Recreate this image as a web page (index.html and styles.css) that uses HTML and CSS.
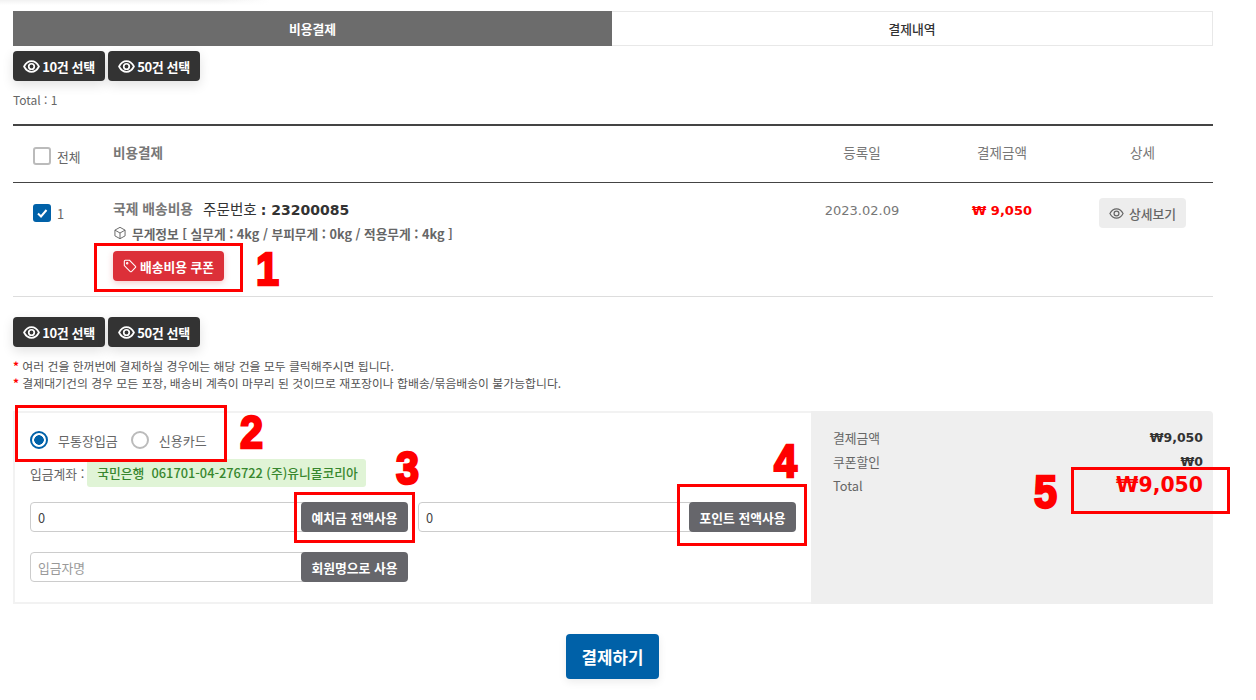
FILE: index.html
```html
<!DOCTYPE html>
<html lang="ko">
<head>
  <meta charset="UTF-8" />
  <title>비용결제</title>
  <link rel="stylesheet" href="styles.css">
</head>
<body>
  <div class="top-shade"></div>
  <div class="wrap">
    <div class="tabs">
      <a class="tab active">비용결제</a>
      <a class="tab">결제내역</a>
    </div>

    <div class="pick-btns">
      <button class="btn-dark"><svg class="eye" viewBox="0 0 16 16"><path d="M1 8s2.6-5 7-5 7 5 7 5-2.6 5-7 5-7-5-7-5z"/><circle cx="8" cy="8" r="2.6"/></svg>10건 선택</button>
      <button class="btn-dark"><svg class="eye" viewBox="0 0 16 16"><path d="M1 8s2.6-5 7-5 7 5 7 5-2.6 5-7 5-7-5-7-5z"/><circle cx="8" cy="8" r="2.6"/></svg>50건 선택</button>
    </div>
    <p class="total">Total : 1</p>

    <div class="list-head">
      <div class="col-check"><span class="check"></span><span class="all">전체</span></div>
      <div class="col-title">비용결제</div>
      <div class="col-c">등록일</div>
      <div class="col-c">결제금액</div>
      <div class="col-c">상세</div>
    </div>

    <div class="list-row">
      <div class="col-check"><span class="check on"><svg viewBox="0 0 18 18"><path d="M5 9.5l3 3 5.5-6.5"/></svg></span><span class="num">1</span></div>
      <div class="col-main">
        <div class="title-line"><strong>국제 배송비용</strong><span class="order">주문번호 <b>: 23200085</b></span></div>
        <div class="weight"><svg class="box" viewBox="0 0 16 16"><path d="M8 1.5l5.8 3.2v6.6L8 14.5l-5.8-3.2V4.7z"/><path d="M2.2 4.7L8 8l5.8-3.3M8 8v6.5"/></svg>무게정보 [ 실무게 : 4kg / 부피무게 : 0kg / 적용무게 : 4kg ]</div>
        <button class="btn-coupon"><svg class="tag" viewBox="0 0 16 16"><path d="M1.5 2.5a1 1 0 0 1 1-1h5l6.8 6.8a1 1 0 0 1 0 1.4l-4.6 4.6a1 1 0 0 1-1.4 0L1.5 7.5z"/><circle cx="4.8" cy="4.8" r=".8"/></svg>배송비용 쿠폰</button>
      </div>
      <div class="col-c date">2023.02.09</div>
      <div class="col-c price">₩ 9,050</div>
      <div class="col-c"><button class="btn-detail"><svg class="eye" viewBox="0 0 16 16"><path d="M1 8s2.6-5 7-5 7 5 7 5-2.6 5-7 5-7-5-7-5z"/><circle cx="8" cy="8" r="2.6"/></svg>상세보기</button></div>
    </div>

    <div class="pick-btns second">
      <button class="btn-dark"><svg class="eye" viewBox="0 0 16 16"><path d="M1 8s2.6-5 7-5 7 5 7 5-2.6 5-7 5-7-5-7-5z"/><circle cx="8" cy="8" r="2.6"/></svg>10건 선택</button>
      <button class="btn-dark"><svg class="eye" viewBox="0 0 16 16"><path d="M1 8s2.6-5 7-5 7 5 7 5-2.6 5-7 5-7-5-7-5z"/><circle cx="8" cy="8" r="2.6"/></svg>50건 선택</button>
    </div>

    <ul class="notes">
      <li>여러 건을 한꺼번에 결제하실 경우에는 해당 건을 모두 클릭해주시면 됩니다.</li>
      <li>결제대기건의 경우 모든 포장, 배송비 계측이 마무리 된 것이므로 재포장이나 합배송/묶음배송이 불가능합니다.</li>
    </ul>

    <div class="pay">
      <div class="pay-left">
        <div class="methods">
          <span class="radio on"></span><span class="radio-label">무통장입금</span>
          <span class="radio"></span><span class="radio-label">신용카드</span>
        </div>
        <div class="account">
          <span>입금계좌 :</span>
          <span class="account-no">국민은행&nbsp; 061701-04-276722 (주)유니몰코리아</span>
        </div>
        <div class="inputs">
          <div class="field"><input type="text" value="0"><button class="btn-gray">예치금 전액사용</button></div>
          <div class="field"><input type="text" value="0"><button class="btn-gray">포인트 전액사용</button></div>
          <div class="field"><input type="text" placeholder="입금자명"><button class="btn-gray">회원명으로 사용</button></div>
        </div>
      </div>
      <div class="pay-right">
        <div class="sum"><span>결제금액</span><b>₩9,050</b></div>
        <div class="sum"><span>쿠폰할인</span><b>₩0</b></div>
        <div class="sum"><span>Total</span><b class="sum-total">₩9,050</b></div>
      </div>
    </div>

    <div class="submit"><button class="btn-pay">결제하기</button></div>
  </div>

  <!-- annotations drawn over the screenshot -->
  <div class="mark m1"></div><span class="digit d1">1</span>
  <div class="mark m2"></div><span class="digit d2">2</span>
  <div class="mark m3"></div><span class="digit d3">3</span>
  <div class="mark m4"></div><span class="digit d4">4</span>
  <div class="mark m5"></div><span class="digit d5">5</span>
</body>
</html>
```

FILE: styles.css
```css
* { box-sizing: border-box; }
html, body { margin: 0; height: 700px; overflow: hidden; }
body { position: relative; background: #fff; font-family: "Noto Sans CJK KR", "Noto Sans", sans-serif; font-size: 12.8px; color: #666; }
button { font-family: inherit; cursor: pointer; border: 0; }
svg { fill: none; stroke: currentColor; }

.top-shade { height: 5px; width: 270px; background: linear-gradient(rgba(255,255,255,0), #fff), linear-gradient(to right, #f2f2f2 80%, #fff); }
.wrap { width: 1200px; margin-left: 13px; padding-top: 6px; }

.tabs { display: flex; height: 35px; }
.tab { flex: 1; display: flex; align-items: center; justify-content: center; font-size: 12.8px; font-weight: 500; color: #333; border: 1px solid #e8e8e8; border-left: 0; }
.tab.active { background: #6c6c6c; color: #fff; border: 0; font-weight: 700; flex: 0 0 599px; }

.pick-btns { display: flex; gap: 3px; margin-top: 5px; }
.pick-btns.second { margin-top: 20px; }
.btn-dark { width: 92px; height: 30px; padding: 0; display: flex; align-items: center; justify-content: center; gap: 2px; background: #333; color: #fff; font-size: 13px; font-weight: 700; border-radius: 4px; box-shadow: 0 4px 12px rgba(0,0,0,.12); letter-spacing: -.4px; }
.eye { width: 17px; height: 17px; stroke-width: 1.6; }

.total { margin: 10px 0 0; height: 18px; line-height: 18px; font-size: 12px; color: #666; }

.list-head, .list-row { display: grid; grid-template-columns: 100px 679px 140px 140px 141px; }
.list-head { margin-top: 15px; height: 59px; border-top: 2px solid #444; border-bottom: 1px solid #444; align-items: center; }
.list-row { height: 114px; border-bottom: 1px solid #ddd; padding-top: 15px; }
.col-check { display: flex; align-items: center; padding-left: 20px; height: 30px; }
.list-head .col-check { height: auto; padding-top: 4px; }
.check { width: 18px; height: 18px; border: 2px solid #bbb; border-radius: 3px; display: block; flex: none; }
.check.on { background: #0061a8; border: 0; color: #fff; }
.check.on svg { display: block; width: 18px; height: 18px; stroke-width: 2; }
.all { margin-left: 6px; font-size: 12.8px; }
.num { margin-left: 6px; font-size: 12.8px; }
.col-title { font-size: 13.6px; font-weight: 700; color: #777; padding-bottom: 4px; }
.col-c { text-align: center; font-size: 13.6px; color: #777; }
.list-head .col-c { padding-bottom: 4px; }

.title-line { display: flex; align-items: center; height: 20px; }
.title-line strong { color: #777; font-weight: 700; font-size: 13.8px; }
.order { margin-left: 10px; color: #333; font-size: 14.6px; }
.order b { font-family: "DejaVu Sans", sans-serif; font-size: 14px; }
.weight { display: flex; align-items: center; height: 20px; margin-top: 5px; font-size: 12.7px; font-weight: 700; color: #666; }
.box { width: 14px; height: 14px; margin-right: 5px; stroke-width: 1.1; }
.btn-coupon { display: flex; align-items: center; justify-content: center; gap: 3px; width: 111px; height: 30px; margin-top: 8px; padding: 0; background: #dc3039; color: #fff; font-size: 12.8px; font-weight: 700; border-radius: 4px; box-shadow: 0 2px 6px rgba(220,48,57,.25); }
.tag { width: 14px; height: 14px; stroke-width: 1.2; }
.date { font-family: "DejaVu Sans", sans-serif; font-size: 13px; color: #777; line-height: 26px; }
.price { font-family: "DejaVu Sans", sans-serif; font-size: 13px; font-weight: 700; color: #f00; line-height: 26px; }
.btn-detail { display: inline-flex; align-items: center; justify-content: center; gap: 5px; width: 87px; height: 30px; padding: 0; background: #ededed; color: #666; font-size: 12.8px; font-weight: 500; border-radius: 4px; }
.btn-detail .eye { width: 15px; height: 15px; stroke-width: 1.3; }

.notes { list-style: none; margin: 10px 0 0; padding: 0; font-size: 11.86px; color: #555; line-height: 17px; }
.notes li::before { content: "* "; color: #f00; font-weight: 700; }

.pay { display: flex; height: 193px; margin-top: 20px; }
.pay-left { width: 798px; padding: 14px 15px 0; border: 2px solid #f2f2f2; border-right: 0; }
.methods { display: flex; align-items: center; height: 26px; font-size: 13px; }
.radio { width: 18px; height: 18px; border: 2px solid #bbb; border-radius: 50%; flex: none; background: #fff; }
.radio.on { border-color: #0061a8; background: radial-gradient(circle, #0061a8 0 4.5px, #fff 5px); }
.radio-label { margin-left: 10px; margin-right: 13px; }
.account { display: flex; align-items: center; gap: 3px; height: 28px; margin-top: 6px; }
.account-no { display: block; width: 279px; height: 28px; line-height: 28px; padding-left: 10px; background: #e0f4d6; color: #37872e; border-radius: 3px; font-weight: 500; }
.inputs { display: flex; flex-wrap: wrap; column-gap: 10px; row-gap: 20px; margin-top: 15px; }
.field { display: flex; width: 378px; height: 30px; }
.field input { width: 100%; min-width: 0; height: 30px; padding: 0 7px; margin-right: -26px; border: 1px solid #ccc; border-radius: 4px; font-family: inherit; font-size: 12.8px; color: #444; outline: 0; }
.field input::placeholder { color: #999; }
.btn-gray { flex: none; position: relative; width: 107px; height: 30px; padding: 0; background: #66666b; color: #fff; font-size: 12.8px; font-weight: 700; border-radius: 4px; }

.pay-right { flex: 1; background: #efefef; border-radius: 0 4px 0 0; padding: 14px 10px 0 22px; }
.sum { display: flex; justify-content: space-between; align-items: center; height: 24px; color: #666; }
.sum b { font-family: "DejaVu Sans", sans-serif; font-size: 12.5px; color: #333; }
.sum b.sum-total { font-size: 20.4px; color: #f00; }

.submit { display: flex; justify-content: center; margin-top: 30px; padding-right: 1px; }
.btn-pay { width: 93px; height: 45px; background: #0061a8; color: #fff; font-size: 16.8px; font-weight: 700; border-radius: 4px; box-shadow: 0 3px 8px rgba(0,0,0,.08); }

.mark { position: absolute; border: 3px solid #f00; }
.m1 { left: 94px; top: 243px; width: 149px; height: 49px; }
.m2 { left: 15px; top: 405px; width: 212px; height: 57px; }
.m3 { left: 294px; top: 492px; width: 121px; height: 51px; }
.m4 { left: 677px; top: 484px; width: 130px; height: 62px; }
.m5 { left: 1071px; top: 467px; width: 159px; height: 47px; }
.digit { position: absolute; font-family: "Liberation Sans", sans-serif; font-weight: 700; font-size: 46px; line-height: 40px; color: #f00; -webkit-text-stroke: 2.5px #f00; transform: scaleX(.9); transform-origin: left top; }
.d1 { left: 256px; top: 249px; }
.d2 { left: 240px; top: 412px; }
.d3 { left: 396px; top: 448px; }
.d4 { left: 774px; top: 441px; }
.d5 { left: 1034px; top: 472px; }
```
